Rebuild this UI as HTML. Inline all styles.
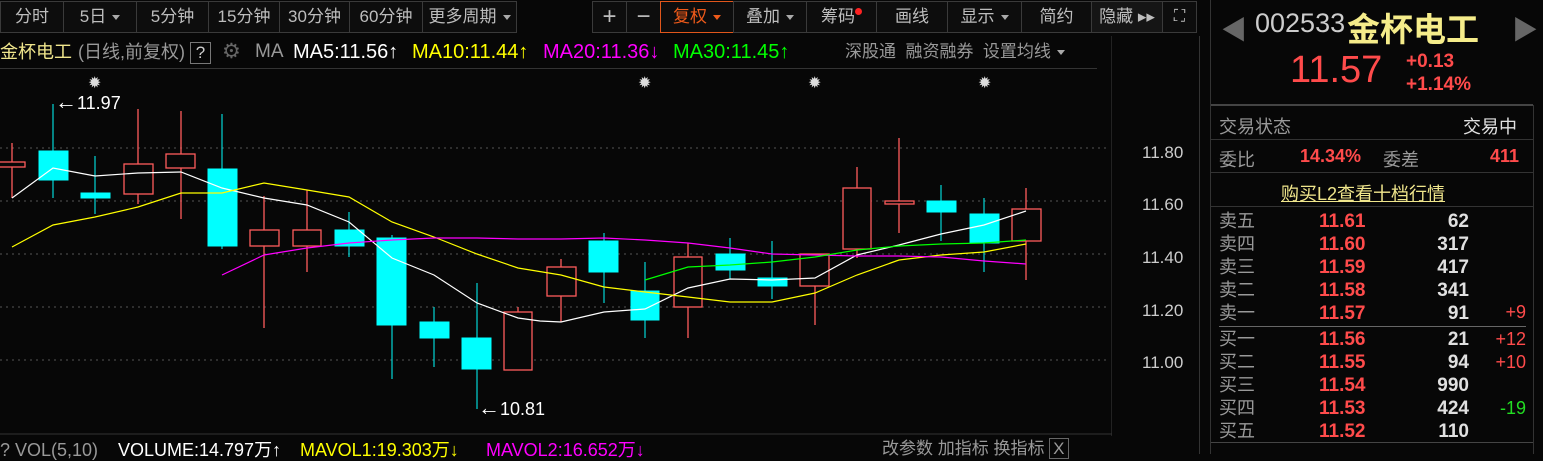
<!DOCTYPE html>
<html><head><meta charset="utf-8"><style>
*{margin:0;padding:0;box-sizing:border-box}
body{width:1543px;height:454px;background:#070707;overflow:hidden;position:relative;font-family:"Liberation Sans","Noto Sans CJK SC",sans-serif;color:#c8c8c8}
.a{position:absolute;white-space:nowrap}
.btn{position:absolute;top:1px;height:32px;border:1px solid #3a3a3a;color:#bdbdbd;font-size:17px;line-height:30px;text-align:center;background:#0d0d0d}
.tri{display:inline-block;width:0;height:0;border-left:4px solid transparent;border-right:4px solid transparent;border-top:5px solid #aaa;vertical-align:middle;margin-left:6px}
.r{color:#ff4b4b}.w{color:#e0e0e0}.g{color:#999}
.h{position:absolute;top:41px;font-size:19px;line-height:22px;white-space:nowrap}
.v{position:absolute;top:439px;font-size:18px;line-height:22px;white-space:nowrap}
</style></head><body>
<div class="btn" style="left:0;width:64px">分时</div>
<div class="btn" style="left:63px;width:74px">5日<span class="tri"></span></div>
<div class="btn" style="left:136px;width:73px">5分钟</div>
<div class="btn" style="left:208px;width:72px">15分钟</div>
<div class="btn" style="left:279px;width:71px">30分钟</div>
<div class="btn" style="left:349px;width:74px">60分钟</div>
<div class="btn" style="left:422px;width:95px">更多周期<span class="tri"></span></div>
<div class="btn" style="left:592px;width:35px;font-size:24px">+</div>
<div class="btn" style="left:626px;width:35px;font-size:24px">−</div>
<div class="btn" style="left:660px;width:74px;border-color:#e0561b;color:#ee5a1a">复权<span class="tri" style="border-top-color:#ee5a1a"></span></div>
<div class="btn" style="left:733px;width:74px">叠加<span class="tri"></span></div>
<div class="btn" style="left:806px;width:71px">筹码<span style="display:inline-block;width:7px;height:7px;border-radius:50%;background:#f22;vertical-align:top;margin-top:6px"></span></div>
<div class="btn" style="left:876px;width:72px">画线</div>
<div class="btn" style="left:947px;width:75px">显示<span class="tri"></span></div>
<div class="btn" style="left:1021px;width:71px">简约</div>
<div class="btn" style="left:1091px;width:72px;background:#151515">隐藏 ▸▸</div>
<div class="btn" style="left:1162px;width:35px;font-size:16px">⛶</div>

<div class="h" style="left:0;color:#f0e68c;font-size:18px">金杯电工</div>
<div class="h g" style="left:78px;font-size:18px">(日线,前复权)</div>
<div class="h" style="left:190px;top:42px;width:21px;height:22px;border:1px solid #777;color:#ccc;font-size:17px;line-height:20px;text-align:center">?</div>
<div class="h" style="left:222px;color:#666;font-size:21px">⚙</div>
<div class="h g" style="left:255px">MA</div>
<div class="h" style="left:293px;color:#fff;font-size:20px">MA5:11.56↑</div>
<div class="h" style="left:412px;color:#ff0;font-size:20px">MA10:11.44↑</div>
<div class="h" style="left:543px;color:#f0f;font-size:20px">MA20:11.36↓</div>
<div class="h" style="left:673px;color:#0f0;font-size:20px">MA30:11.45↑</div>
<div class="a g" style="left:845px;top:42px;font-size:17px;line-height:20px">深股通&nbsp;&nbsp;融资融券&nbsp;&nbsp;设置均线<span class="tri"></span></div>
<div class="a" style="left:0;top:68px;width:1097px;height:1px;background:#333"></div>
<div class="a" style="left:1111px;top:36px;width:1px;height:400px;background:#222"></div>
<div class="a" style="left:1199px;top:36px;width:1px;height:418px;background:#333"></div>

<svg class="a" style="left:0;top:0" width="1200" height="454">
<g stroke="#555" stroke-dasharray="2,4" stroke-width="1">
<line x1="0" y1="148" x2="1110" y2="148"/><line x1="0" y1="201" x2="1110" y2="201"/><line x1="0" y1="254" x2="1110" y2="254"/><line x1="0" y1="307" x2="1110" y2="307"/><line x1="0" y1="360" x2="1110" y2="360"/></g>
<g fill="#ccc" font-size="17" font-family="Liberation Sans"><text x="1142" y="158">11.80</text><text x="1142" y="210">11.60</text><text x="1142" y="263">11.40</text><text x="1142" y="316">11.20</text><text x="1142" y="368">11.00</text></g>
<g fill="#ddd" font-size="16"><text x="88" y="88">✹</text><text x="638" y="88">✹</text><text x="808" y="88">✹</text><text x="978" y="88">✹</text></g>
<g fill="#fff" font-size="18" font-family="Liberation Sans"><text x="55" y="109"><tspan font-size="22">←</tspan>11.97</text><text x="478" y="415"><tspan font-size="22">←</tspan>10.81</text></g>
<g stroke="#00ffff" fill="#00ffff">
<line x1="53" y1="104" x2="53" y2="198"/><rect x="39" y="151" width="29" height="29"/>
<line x1="95" y1="156" x2="95" y2="214"/><rect x="81" y="193" width="29" height="5"/>
<line x1="222" y1="114" x2="222" y2="249"/><rect x="208" y="169" width="29" height="77"/>
<line x1="349" y1="212" x2="349" y2="257"/><rect x="335" y="230" width="29" height="16"/>
<line x1="392" y1="235" x2="392" y2="379"/><rect x="377" y="238" width="29" height="87"/>
<line x1="434" y1="307" x2="434" y2="367"/><rect x="420" y="322" width="29" height="16"/>
<line x1="477" y1="283" x2="477" y2="409"/><rect x="462" y="338" width="29" height="31"/>
<line x1="604" y1="233" x2="604" y2="303"/><rect x="589" y="241" width="29" height="31"/>
<line x1="645" y1="262" x2="645" y2="338"/><rect x="631" y="291" width="28" height="29"/>
<line x1="730" y1="238" x2="730" y2="279"/><rect x="716" y="254" width="29" height="16"/>
<line x1="772" y1="241" x2="772" y2="299"/><rect x="758" y="278" width="29" height="8"/>
<line x1="941" y1="185" x2="941" y2="241"/><rect x="927" y="201" width="29" height="11"/>
<line x1="984" y1="198" x2="984" y2="272"/><rect x="970" y="214" width="29" height="29"/>
</g>
<g stroke="#ff5c5c" fill="#070707" stroke-width="1.3">
<line x1="12" y1="143" x2="12" y2="198"/><rect x="-2" y="162" width="27" height="5"/>
<line x1="138" y1="109" x2="138" y2="204"/><rect x="124" y="164" width="29" height="30"/>
<line x1="181" y1="111" x2="181" y2="219"/><rect x="166" y="154" width="29" height="14"/>
<line x1="264" y1="196" x2="264" y2="328"/><rect x="250" y="230" width="29" height="16"/>
<line x1="307" y1="190" x2="307" y2="272"/><rect x="293" y="230" width="28" height="16"/>
<line x1="518" y1="307" x2="518" y2="312"/><rect x="504" y="312" width="28" height="58"/>
<line x1="561" y1="259" x2="561" y2="322"/><rect x="547" y="267" width="29" height="29"/>
<line x1="688" y1="243" x2="688" y2="338"/><rect x="674" y="257" width="28" height="50"/>
<line x1="815" y1="254" x2="815" y2="325"/><rect x="800" y="254" width="29" height="32"/>
<line x1="857" y1="167" x2="857" y2="258"/><rect x="843" y="188" width="28" height="61"/>
<line x1="899" y1="138" x2="899" y2="233"/><rect x="885" y="201" width="29" height="3"/>
<line x1="1026" y1="188" x2="1026" y2="280"/><rect x="1012" y="209" width="29" height="32"/>
</g>
<g fill="none" stroke-width="1.2">
<polyline stroke="#fff" points="12,198 53,168 95,176 138,173 181,172 222,188 264,198 307,205 349,222 392,258 434,275 477,303 518,318 540,321 561,322 604,312 645,309 688,288 730,279 772,280 815,278 857,255 899,245 941,234 984,225 1026,211"/>
<polyline stroke="#ff0" points="12,247 53,225 95,217 138,207 181,193 222,193 264,183 307,190 349,197 392,222 434,237 477,254 518,268 561,275 604,287 645,292 688,297 730,302 772,302 815,293 857,275 899,260 941,255 984,252 1026,244"/>
<polyline stroke="#f0f" points="222,275 264,255 307,248 349,243 392,240 434,238 477,238 518,239 561,239 604,238 645,240 688,243 730,248 772,254 815,255 857,256 899,256 941,257 984,261 1026,264"/>
<polyline stroke="#0f0" points="645,280 688,267 730,265 772,262 815,257 857,250 899,246 941,244 984,243 1026,240"/>
</g>
<line x1="0" y1="434" x2="1112" y2="434" stroke="#333"/>
</svg>
<div class="v g" style="left:0">? VOL(5,10)</div>
<div class="v" style="left:118px;color:#fff">VOLUME:14.797万↑</div>
<div class="v" style="left:300px;color:#ff0">MAVOL1:19.303万↓</div>
<div class="v" style="left:486px;color:#f0f">MAVOL2:16.652万↓</div>
<div class="a g" style="left:882px;top:439px;font-size:17px;line-height:20px">改参数&nbsp;加指标&nbsp;换指标&nbsp;<span style="border:1px solid #666;padding:0 3px">X</span></div>

<!-- right panel -->
<div class="a" style="left:1210px;top:0;width:1px;height:454px;background:#333"></div>
<div class="a" style="left:1533px;top:105px;width:1px;height:349px;background:#333"></div>
<div class="a" style="left:1221px;top:10px;font-size:26px;color:#666">◀</div>
<div class="a" style="left:1512px;top:10px;font-size:26px;color:#666">▶</div>
<div class="a" style="left:1255px;top:8px;font-size:27px;color:#ccc">002533</div>
<div class="a" style="left:1347px;top:3px;font-size:33px;color:#f5ec8a;font-weight:bold">金杯电工</div>
<div class="a r" style="left:1290px;top:49px;font-size:38px">11.57</div>
<div class="a r" style="left:1406px;top:50px;font-size:19px;font-weight:bold;line-height:23px">+0.13<br>+1.14%</div>
<div class="a" style="left:1211px;top:104px;width:322px;height:2px;background:#444"></div>
<div class="a g" style="left:1219px;top:113px;font-size:18px">交易状态</div>
<div class="a w" style="left:1463px;top:113px;font-size:18px">交易中</div>
<div class="a" style="left:1211px;top:139px;width:322px;height:1px;background:#333"></div>
<div class="a g" style="left:1219px;top:146px;font-size:18px">委比</div>
<div class="a r" style="left:1300px;top:146px;font-size:18px;font-weight:bold">14.34%</div>
<div class="a g" style="left:1383px;top:146px;font-size:18px">委差</div>
<div class="a r" style="left:1490px;top:146px;font-size:18px;font-weight:bold">411</div>
<div class="a" style="left:1211px;top:172px;width:322px;height:1px;background:#333"></div>
<div class="a" style="left:1281px;top:180px;font-size:18px;color:#f0e68c;text-decoration:underline">购买L2查看十档行情</div>
<div class="a" style="left:1211px;top:206px;width:322px;height:1px;background:#333"></div>
<div class="a" style="left:1219px;top:326px;width:307px;height:1px;background:#666"></div>
<div class="a g" style="left:1219px;top:210px;font-size:18px;line-height:23px">卖五<br>卖四<br>卖三<br>卖二<br>卖一</div>
<div class="a r" style="left:1319px;top:210px;font-size:19px;font-weight:bold;line-height:23px">11.61<br>11.60<br>11.59<br>11.58<br>11.57</div>
<div class="a w" style="left:1400px;top:210px;width:69px;text-align:right;font-size:19px;font-weight:bold;line-height:23px">62<br>317<br>417<br>341<br>91</div>
<div class="a r" style="left:1470px;top:302px;width:56px;text-align:right;font-size:18px">+9</div>
<div class="a g" style="left:1219px;top:328px;font-size:18px;line-height:23px">买一<br>买二<br>买三<br>买四<br>买五</div>
<div class="a r" style="left:1319px;top:328px;font-size:19px;font-weight:bold;line-height:23px">11.56<br>11.55<br>11.54<br>11.53<br>11.52</div>
<div class="a w" style="left:1400px;top:328px;width:69px;text-align:right;font-size:19px;font-weight:bold;line-height:23px">21<br>94<br>990<br>424<br>110</div>
<div class="a" style="left:1470px;top:328px;width:56px;text-align:right;font-size:18px;line-height:23px"><span class="r">+12</span><br><span class="r">+10</span><br>&nbsp;<br><span style="color:#2d2">-19</span></div>
<div class="a" style="left:1211px;top:442px;width:322px;height:1px;background:#444"></div>
</body></html>
